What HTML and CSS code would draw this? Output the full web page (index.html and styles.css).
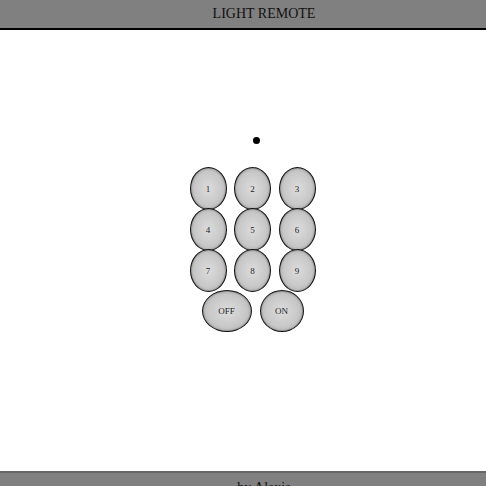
FILE: index.html
```html
<!DOCTYPE html>
<html>
<head>
<meta charset="utf-8">
<link rel="stylesheet" href="styles.css">
</head>
<body>
<header class="top">LIGHT REMOTE</header>
<main class="main">
  <div class="dot"></div>
  <div class="pad">
    <div class="row">
      <button class="key">1</button><button class="key">2</button><button class="key">3</button>
    </div>
    <div class="row">
      <button class="key">4</button><button class="key">5</button><button class="key">6</button>
    </div>
    <div class="row">
      <button class="key">7</button><button class="key">8</button><button class="key">9</button>
    </div>
    <div class="row row-last">
      <button class="key key-off">OFF</button><button class="key key-on">ON</button>
    </div>
  </div>
</main>
<footer class="bottom">by Alexis</footer>
</body>
</html>
```
FILE: styles.css
```css
html, body {
  margin: 0;
  padding: 0;
  background: #fff;
  font-family: "Liberation Serif", "Times New Roman", serif;
}
.top {
  height: 28px;
  line-height: 28px;
  background: #808080;
  border-bottom: 2px solid #000;
  text-align: center;
  padding-left: 42px;
  font-size: 14px;
  color: #111;
}
.main {
  height: 441px;
  display: flex;
  flex-direction: column;
  align-items: center;
  padding-left: 19px;
  box-sizing: border-box;
}
.dot {
  width: 7px;
  height: 7px;
  border-radius: 50%;
  background: #000;
  margin-top: 107px;
  margin-left: 7px;
}
.pad {
  margin-top: 23px;
  display: flex;
  flex-direction: column;
  align-items: center;
}
.row {
  display: flex;
  gap: 7.5px;
  margin-top: -2px;
}
.row:first-child {
  margin-top: 0;
}
.row-last {
  gap: 8px;
  margin-top: -2px;
}
.key {
  width: 37px;
  height: 43px;
  padding: 0;
  border: 1px solid #111;
  border-radius: 50%;
  background: radial-gradient(ellipse at center, #dcdcdc 0%, #c8c8c8 55%, #a4a4a4 100%);
  box-shadow: inset 0 0 2px rgba(0,0,0,0.55);
  font-family: "Liberation Serif", "Times New Roman", serif;
  font-size: 9px;
  color: #222;
  display: flex;
  align-items: center;
  justify-content: center;
}
.key-off {
  width: 50px;
  height: 42px;
}
.key-on {
  width: 44px;
  height: 42px;
}
.bottom {
  background: #808080;
  border-top: 2px solid #666;
  text-align: center;
  padding-left: 42px;
  padding-top: 7px;
  font-size: 14px;
  color: #111;
  height: 40px;
}
```
